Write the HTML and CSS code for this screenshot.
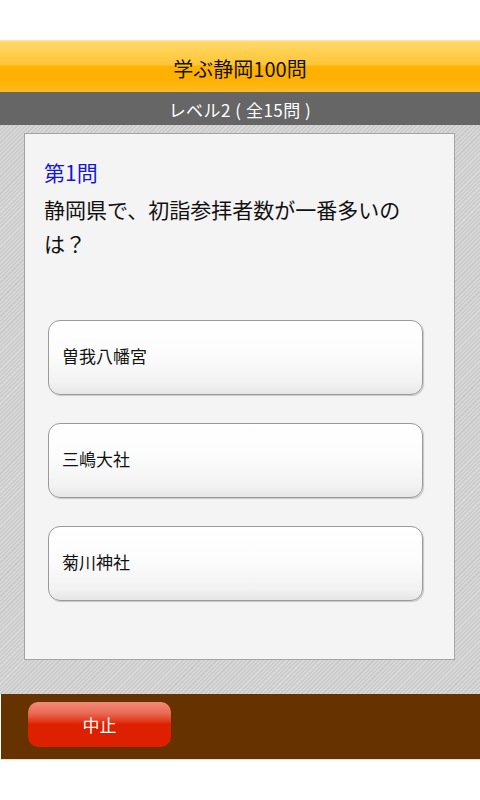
FILE: index.html
```html
<!DOCTYPE html>
<html lang="ja">
<head>
<meta charset="utf-8">
<title>学ぶ静岡100問</title>
<link rel="stylesheet" href="styles.css">
</head>
<body>
<div class="app">
  <div class="top-space"></div>
  <header class="header">学ぶ静岡100問</header>
  <div class="subbar">レベル2 ( 全15問 )</div>
  <main class="main">
    <section class="card">
      <div class="q-num">第1問</div>
      <div class="q-text">静岡県で、初詣参拝者数が一番多いのは？</div>
      <div class="answers">
        <div class="answer">曽我八幡宮</div>
        <div class="answer">三嶋大社</div>
        <div class="answer">菊川神社</div>
      </div>
    </section>
  </main>
  <footer class="footer">
    <div class="stop-btn">中止</div>
  </footer>
</div>
</body>
</html>
```

FILE: styles.css
```css
html, body {
  margin: 0;
  padding: 0;
  background: #ffffff;
}
body {
  font-family: "Noto Sans CJK JP", "Noto Sans", sans-serif;
  width: 480px;
  height: 800px;
  overflow: hidden;
}
.app {
  display: flex;
  flex-direction: column;
}
.top-space {
  height: 40px;
  background: #ffffff;
}
.header {
  height: 52px;
  display: flex;
  align-items: center;
  justify-content: center;
  padding-top: 4px;
  box-sizing: border-box;
  font-size: 20px;
  color: #111;
  background: linear-gradient(to bottom, #ffe9a6 0, #ffd86a 4%, #ffcd48 30%, #ffc43a 48%, #ffb200 50%, #ffb000 75%, #ffbc22 100%);
}
.subbar {
  height: 33px;
  background: #666666;
  color: #ffffff;
  font-size: 17px;
  display: flex;
  align-items: center;
  justify-content: center;
  padding-top: 2px;
  box-sizing: border-box;
  white-space: pre;
  letter-spacing: 0.5px;
}
.main {
  height: 569px;
  box-sizing: border-box;
  padding: 8px 25px 0 24px;
  background: repeating-linear-gradient(135deg, #cbcbcb 0 1.5px, #d8d8d8 1.5px 3px);
}
.card {
  height: 527px;
  box-sizing: border-box;
  background: #f4f4f4;
  border: 1px solid #a4a4a4;
  padding: 24px 0 0 19px;
}
.q-num {
  font-size: 21px;
  line-height: 28px;
  color: #1616d4;
  margin-bottom: 6px;
}
.q-text {
  font-size: 21px;
  line-height: 34px;
  color: #111;
  width: 365px;
}
.answers {
  display: flex;
  flex-direction: column;
  gap: 28px;
  margin-top: 60px;
  margin-left: 4px;
}
.answer {
  width: 375px;
  height: 75px;
  box-sizing: border-box;
  border: 1px solid #9a9a9a;
  border-radius: 12px;
  background: linear-gradient(to bottom, #ffffff 0, #fcfcfc 45%, #f2f2f2 85%, #e6e6e6 100%);
  box-shadow: 1px 1px 1px rgba(0, 0, 0, 0.18);
  display: flex;
  align-items: center;
  padding-left: 13px;
  padding-bottom: 4px;
  font-size: 17px;
  color: #111;
}
.footer {
  height: 66px;
  box-sizing: border-box;
  margin-left: 1px;
  background: #663300;
  border-bottom: 1px solid #f3dcc4;
  padding: 8px 0 0 27px;
}
.stop-btn {
  width: 143px;
  height: 45px;
  border-radius: 10px;
  background: linear-gradient(to bottom, #f28a78 0, #ea6a54 25%, #e23a1c 42%, #dd2000 50%, #dd2000 100%);
  color: #ffffff;
  font-size: 17px;
  display: flex;
  align-items: center;
  justify-content: center;
  box-shadow: 0 0 1px rgba(0, 0, 0, 0.4);
}
```
